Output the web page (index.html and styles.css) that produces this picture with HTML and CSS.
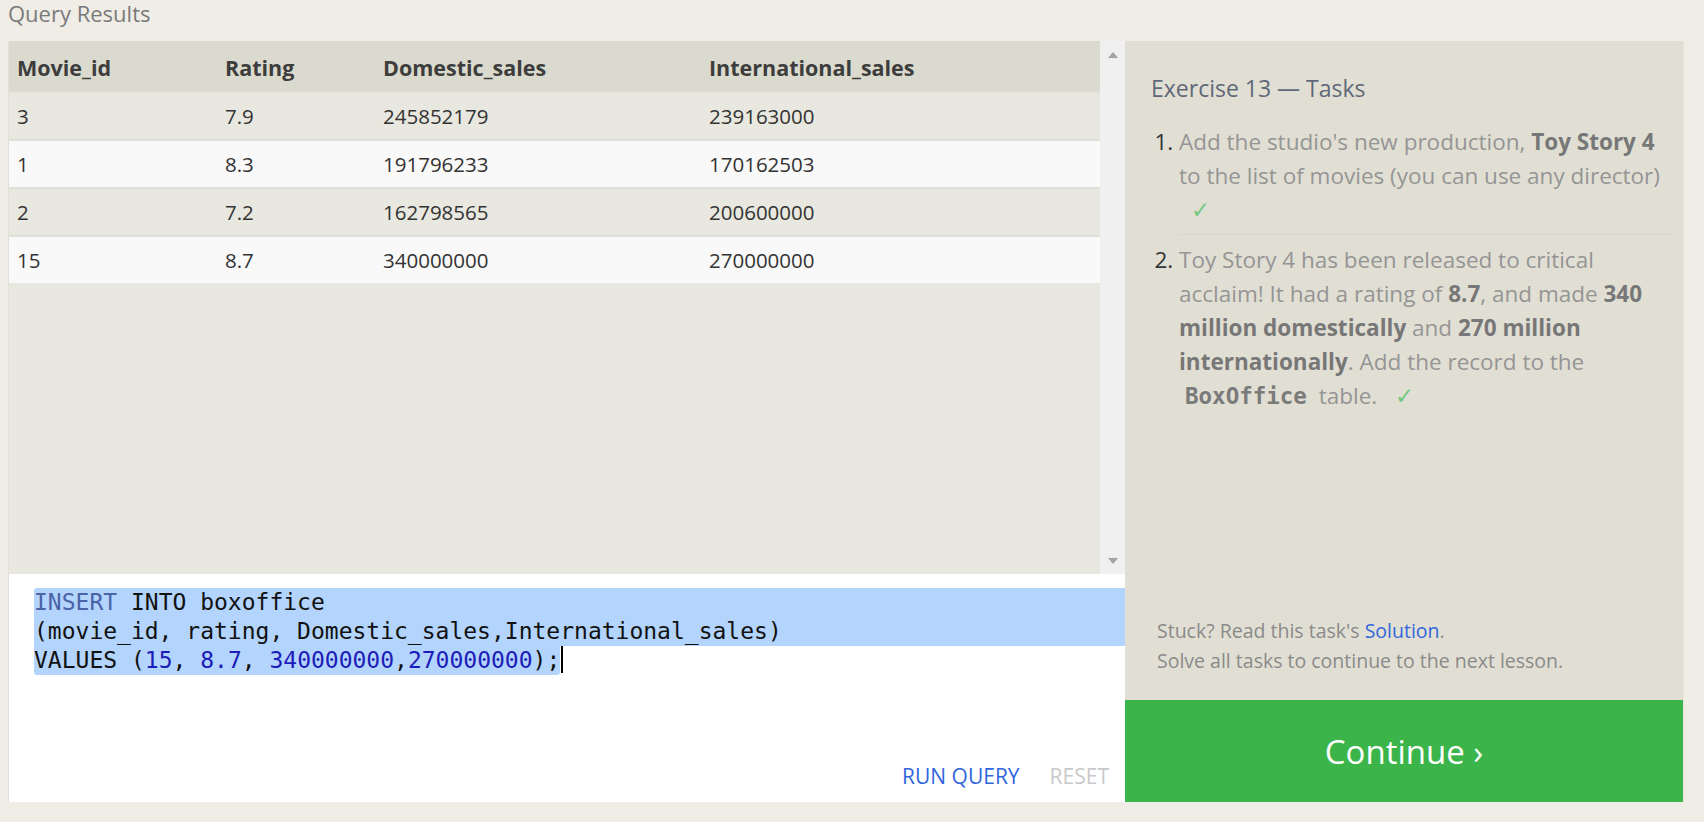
FILE: index.html
```html
<!DOCTYPE html>
<html>
<head>
<meta charset="utf-8">
<link rel="stylesheet" href="styles.css">
</head>
<body>
<div class="page-title">Query Results</div>
<div class="workspace">
  <div class="left">
    <div class="results">
      <div class="table-wrap">
        <table class="grid">
          <colgroup>
            <col class="c1"><col class="c2"><col class="c3"><col class="c4">
          </colgroup>
          <thead>
            <tr><th>Movie_id</th><th>Rating</th><th>Domestic_sales</th><th>International_sales</th></tr>
          </thead>
          <tbody>
            <tr class="odd"><td>3</td><td>7.9</td><td>245852179</td><td>239163000</td></tr>
            <tr class="even"><td>1</td><td>8.3</td><td>191796233</td><td>170162503</td></tr>
            <tr class="odd"><td>2</td><td>7.2</td><td>162798565</td><td>200600000</td></tr>
            <tr class="even"><td>15</td><td>8.7</td><td>340000000</td><td>270000000</td></tr>
          </tbody>
        </table>
      </div>
      <div class="scrollbar">
        <svg class="arrow" width="12" height="8" viewBox="0 0 12 8"><polygon points="6,1 11,7 1,7" fill="#a3a3a3"/></svg>
        <svg class="arrow" width="12" height="8" viewBox="0 0 12 8"><polygon points="1,1 11,1 6,7" fill="#a3a3a3"/></svg>
      </div>
    </div>
    <div class="editor">
      <div class="code">
        <div class="line sel-full first"><span class="kw">INSERT</span> INTO boxoffice</div>
        <div class="line sel-full">(movie_id, rating, Domestic_sales,International_sales)</div>
        <div class="line"><span class="sel-part">VALUES (<span class="num">15</span>, <span class="num">8.7</span>, <span class="num">340000000</span>,<span class="num">270000000</span>);</span><span class="cursor"></span></div>
      </div>
      <div class="actions">
        <span class="run">RUN QUERY</span>
        <span class="reset">RESET</span>
      </div>
    </div>
  </div>
  <div class="right">
    <div class="tasks">
      <h2 class="tasks-title">Exercise 13 — Tasks</h2>
      <ol class="task-list">
        <li>Add the studio's new production, <b>Toy Story 4</b> to the list of movies (you can use any director) <span class="check">✓</span></li>
        <li>Toy Story 4 has been released to critical acclaim! It had a rating of <b>8.7</b>, and made <b>340 million domestically</b> and <b>270 million internationally</b>. Add the record to the <code>BoxOffice</code> table. <span class="check">✓</span></li>
      </ol>
    </div>
    <div class="help">
      <div>Stuck? Read this task's <span class="link">Solution</span>.</div>
      <div>Solve all tasks to continue to the next lesson.</div>
    </div>
    <div class="continue">Continue ›</div>
  </div>
</div>
</body>
</html>
```

FILE: styles.css
```css
html, body {
  margin: 0;
  padding: 0;
}
body {
  background: #efede6;
  font-family: "Open Sans", "Noto Sans", sans-serif;
  width: 1704px;
  height: 822px;
  overflow: hidden;
}
.page-title {
  height: 41px;
  padding-left: 8px;
  font-size: 22px;
  line-height: 26px;
  color: #7a7a7a;
}
.workspace {
  display: flex;
  margin-left: 8px;
  width: 1676px;
  height: 761px;
}
.left {
  width: 1116px;
  border-left: 1px solid #e2e0d8;
  display: flex;
  flex-direction: column;
}
.results {
  flex: none;
  height: 533px;
  display: flex;
  background: #e9e8e0;
}
.table-wrap {
  flex: 1;
}
.grid {
  width: 100%;
  border-collapse: collapse;
  table-layout: fixed;
}
.c1 { width: 208px; }
.c2 { width: 158px; }
.c3 { width: 326px; }
.grid th {
  background: #dbdace;
  color: #3d3d3d;
  font-weight: 700;
  font-size: 21.5px;
  text-align: left;
  padding: 2px 0 0 8px;
  height: 51px;
  box-sizing: border-box;
}
.grid td {
  font-size: 20.5px;
  color: #333;
  padding: 0 0 0 8px;
  height: 46px;
  border-top: 2px solid #e0dfd8;
}
.grid tr.odd td { background: #e9e8e0; }
.grid tr.even td { background: #f9f9f9; }
.scrollbar {
  width: 25px;
  background: #f0f0f0;
  display: flex;
  flex-direction: column;
  justify-content: space-between;
  align-items: center;
  padding: 10px 0 9px;
  box-sizing: border-box;
}
.arrow { display: block; }
.editor {
  flex: 1;
  min-height: 0;
  background: #ffffff;
  display: flex;
  flex-direction: column;
  justify-content: space-between;
}
.code {
  padding-top: 14px;
  padding-left: 25px;
  font-family: "DejaVu Sans Mono", "Liberation Mono", monospace;
  font-size: 23px;
  line-height: 29px;
  color: #111;
}
.line {
  height: 29px;
  white-space: pre;
}
.sel-full { background: #b3d4fc; }
.sel-full.first { border-top-left-radius: 3px; }
.sel-part {
  background: #b3d4fc;
  border-bottom-left-radius: 3px;
  border-bottom-right-radius: 3px;
  display: inline-block;
  height: 29px;
  vertical-align: top;
}
.cursor {
  display: inline-block;
  width: 2px;
  height: 27px;
  margin-left: 1px;
  background: #000;
  vertical-align: top;
}
.kw { color: #4a63a8; }
.num { color: #1c1cb8; }
.actions {
  display: flex;
  justify-content: flex-end;
  gap: 30px;
  padding: 0 16px 12px 0;
  font-size: 21px;
}
.run { color: #3366dd; }
.reset { color: #c9c9c9; }
.right {
  flex: 1;
  background: #e1dfd4;
  display: flex;
  flex-direction: column;
  border-right: 1px solid #e6e4dc;
}
.tasks {
  flex: 1;
  padding: 32px 10px 0 26px;
}
.tasks-title {
  margin: 0;
  font-weight: 400;
  font-size: 23px;
  line-height: 30px;
  color: #5f6878;
}
.task-list {
  margin: 22px 0 0 0;
  padding-left: 28px;
  font-size: 22.5px;
  line-height: 34px;
  color: #959595;
}
.task-list li::marker {
  color: #333;
}
.task-list li + li {
  border-top: 1px solid #d8d6cc;
  padding-top: 8px;
}
.task-list li:first-child {
  padding-bottom: 7px;
}
.task-list b {
  color: #777;
  font-weight: 700;
}
.task-list code {
  font-family: "DejaVu Sans Mono", "Liberation Mono", monospace;
  font-weight: 700;
  color: #7a7a7a;
  font-size: 22.5px;
  padding: 0 6px;
}
.check {
  color: #74c983;
  margin-left: 12px;
}
.help {
  padding: 0 0 24px 32px;
  font-size: 19.5px;
  line-height: 30px;
  color: #8a8a8a;
}
.link { color: #3366dd; }
.continue {
  height: 102px;
  background: #3bb54a;
  color: #ffffff;
  font-size: 33px;
  display: flex;
  align-items: center;
  justify-content: center;
}
```
